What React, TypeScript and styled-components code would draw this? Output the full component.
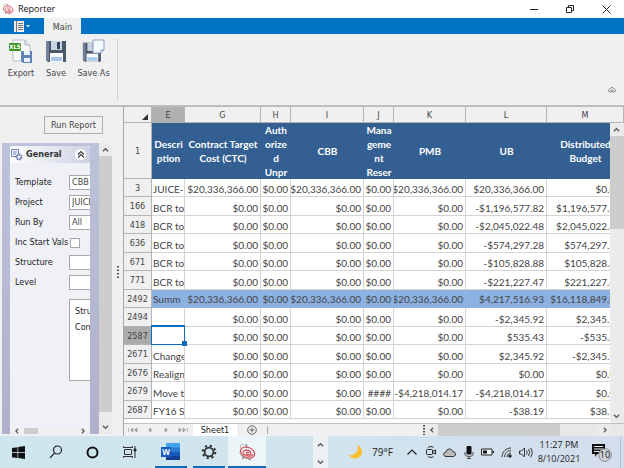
import React from "react";
import styled, { createGlobalStyle } from "styled-components";

const ui = `"DejaVu Sans Condensed", "Noto Sans", sans-serif`;
const segoe = `"Open Sans", "Noto Sans", sans-serif`;
const sheetFont = `Lato, "Open Sans", sans-serif`;

const Global = createGlobalStyle`
  * { box-sizing: border-box; }
  body { margin: 0; background: #f0f0f0; }
  button, select, input { font: inherit; color: inherit; }
`;

const Page = styled.div`
  display: flex;
  flex-direction: column;
  min-height: 100vh;
  overflow: hidden;
  background: #f0f0f0;
  color: #444;
  font: 9px/12px ${ui};
`;

const PlainButton = styled.button`
  display: flex;
  align-items: center;
  justify-content: center;
  padding: 0;
  border: 0;
  background: none;
`;

/* Title bar */
const TitleBar = styled.header`
  display: flex;
  align-items: center;
  height: 18px;
  padding-left: 2px;
  background: #fff;
  color: #111;
`;
const Title = styled.h1`
  flex: 1;
  margin: 0 0 0 4px;
  font: 9px/16px ${segoe};
`;
const WindowButton = styled(PlainButton)`
  width: 36px;
  height: 16px;
`;

/* Ribbon */
const TabStrip = styled.nav`
  display: flex;
  gap: 1px;
  height: 17px;
  background: #0072c6;
  border-bottom: 1px solid #e4eef6;
`;
const AppMenu = styled(PlainButton)`
  width: 43px;
  gap: 2px;
`;
const Tab = styled(PlainButton)`
  width: 37px;
  height: 17px;
  background: #f0f0f0;
`;
const Ribbon = styled.section`
  display: flex;
  height: 72px;
  padding: 4px 6px 5px 2px;
  border-bottom: 2px solid #bcbcbc;
`;
const RibbonGroup = styled.div`
  display: flex;
  align-items: flex-start;
  width: 116px;
  border-right: 1px solid #cfcfcf;
`;
const RibbonButton = styled(PlainButton)<{ $w: number }>`
  flex-direction: column;
  gap: 4px;
  width: ${(p) => p.$w}px;
  white-space: nowrap;
`;
const Collapse = styled(PlainButton)`
  margin: auto 0 0 auto;
  width: 12px;
  height: 14px;
  align-items: flex-start;
`;

/* Body */
const Body = styled.main`
  display: flex;
  flex: 1;
  min-height: 0;
`;
const Side = styled.aside`
  display: flex;
  flex-direction: column;
  width: 112px;
  padding: 9px 0 2px 2px;
`;
const RunButton = styled.button`
  align-self: flex-end;
  width: 59px;
  height: 18px;
  margin-right: 9px;
  padding: 0;
  border: 1px solid #adadad;
  background: #f1f1f1;
`;
const Pane = styled.div`
  display: flex;
  flex: 1;
  margin-top: 9px;
`;
const PaneBody = styled.div`
  display: flex;
  flex: 1;
  min-width: 0;
  padding: 3px 9px 0 8px;
  background: linear-gradient(#bcc2da, #b0b0cc);
`;
const Group = styled.section`
  display: flex;
  flex-direction: column;
  flex: 1;
  min-width: 0;
  overflow: hidden;
  background: #eff1f6;
`;
const GroupHead = styled.header`
  display: flex;
  align-items: center;
  height: 17px;
  padding: 0 4px 0 1px;
  border-radius: 3px 3px 0 0;
  background: linear-gradient(90deg, #fff, #ccd0e2);
  h2 {
    flex: 1;
    margin: 0 0 0 3px;
    font: bold 9px/15px ${ui};
    color: #333;
  }
`;
const Round = styled(PlainButton)`
  width: 11px;
  height: 11px;
  border-radius: 50%;
  background: #fff;
`;
const Form = styled.form`
  display: flex;
  flex-direction: column;
  padding: 9px 0 0 5px;
  color: #222;
`;
const Field = styled.div`
  display: grid;
  grid-template-columns: 54px 60px;
  align-items: center;
  height: 20px;
  white-space: nowrap;
`;
const Select = styled.select`
  appearance: none;
  height: 15px;
  padding: 0 2px;
  border: 1px solid #a8a8a8;
  border-radius: 0;
  background: #fff;
  color: #444;
`;
const Check = styled.input`
  appearance: none;
  width: 10px;
  height: 10px;
  margin: 2px 0 0 1px;
  border: 1px solid #a8a8a8;
  background: #fff;
`;
const ListBox = styled.ul`
  width: 60px;
  height: 82px;
  margin: 7px 0 0 54px;
  padding: 3px 5px;
  border: 1px solid #a8a8a8;
  background: #fff;
  list-style: none;
  line-height: 16px;
`;
const HScroll = styled.div`
  display: flex;
  align-items: center;
  height: 6px;
  margin-top: auto;
  padding: 0 4px;
  background: #f0f0f0;
  i {
    width: 14px;
    height: 6px;
    margin: 0 auto 0 4px;
    background: #cdcdcd;
  }
`;
const VScroll = styled.div`
  display: flex;
  flex-direction: column;
  width: 13px;
  background: #f0f0f0;
`;
const Arrow = styled(PlainButton)`
  width: 13px;
  height: 13px;
  background: #ebebeb;
`;
const Thumb = styled.div`
  flex: 1;
  background: #cdcdcd;
`;
const ArrowTall = styled(Arrow)`
  height: 22px;
  padding-top: 8px;
`;
const Splitter = styled.div`
  display: flex;
  align-items: center;
  justify-content: center;
  width: 11px;
`;

/* Spreadsheet */
const Sheet = styled.section`
  display: flex;
  flex-direction: column;
  flex: 1;
  min-width: 0;
  border-left: 1px solid #a8a8a8;
`;
const SheetView = styled.div`
  position: relative;
  flex: 1;
  overflow: hidden;
  background: #fff;
`;
const Table = styled.table`
  width: 100%;
  min-width: 500px;
  table-layout: fixed;
  border-collapse: separate;
  border-spacing: 0;
  font: 10px/17px ${sheetFont};
  tbody tr:nth-child(odd) > * { height: 18px; }
  tbody tr:nth-child(even) > * { height: 19px; }
`;
const Col = styled.col<{ $w?: number }>`
  width: ${(p) => (p.$w ? `${p.$w}px` : "auto")};
`;
const Letter = styled.th<{ $on?: boolean }>`
  height: 16px;
  padding: 0;
  border: solid #b4b4b4;
  border-width: 0 1px 1px 0;
  background: ${(p) => (p.$on ? "#b0b0b0" : "#f0f0f0")};
  font: 9px/14px ${ui};
  text-align: center;
  svg { display: block; margin: 5px 3px 0 auto; }
`;
const RowNo = styled.th<{ $on?: boolean }>`
  padding: 0;
  border: solid #b4b4b4;
  border-width: 0 1px 1px 0;
  background: ${(p) => (p.$on ? "#ababab" : "#f0f0f0")};
  font: 9px/14px ${ui};
  text-align: center;
`;
const Heading = styled.td`
  height: 56px;
  padding: 0;
  overflow: hidden;
  background: #335f93;
  color: #fff;
  font: bold 10px/14px ${sheetFont};
  text-align: center;
  white-space: nowrap;
`;
const Cell = styled.td<{ $sum?: boolean; $left?: boolean; $active?: boolean }>`
  position: relative;
  padding: ${(p) => (p.$sum ? "2px" : "4px")} 2px 0 1px;
  border: solid ${(p) => (p.$sum ? "#8db1e2" : "#d4d4d4")};
  border-width: 0 1px 1px 0;
  background: ${(p) => (p.$sum ? "#8db1e2" : "#fff")};
  line-height: 13px;
  text-align: ${(p) => (p.$left ? "left" : "right")};
  white-space: nowrap;
  overflow: ${(p) => (p.$active ? "visible" : "hidden")};
`;
const WideValue = styled.span`
  display: flex;
  justify-content: flex-end;
`;
const Selection = styled.span`
  position: absolute;
  inset: -2px -1px -1px -1px;
  border: 1px solid #0f6cbd;
  border-width: 2px 1px 1px;
  z-index: 1;
  &::after {
    content: "";
    position: absolute;
    right: -3px;
    bottom: -2px;
    width: 5px;
    height: 5px;
    background: #0f6cbd;
  }
`;
const SheetScroll = styled(VScroll)`
  position: absolute;
  top: 16px;
  right: 0;
  bottom: 0;
  width: 14px;
  background: #ebebeb;
  ${Thumb} { flex: 0 0 93px; }
  ${Arrow}:last-child { margin-top: auto; }
`;
const SheetBar = styled.footer`
  display: flex;
  align-items: center;
  height: 13px;
  border-top: 1px solid #c0c0c0;
  background: #f0f0f0;
`;
const NavButton = styled(PlainButton)`
  width: 17px;
  height: 12px;
`;
const AddButton = styled(NavButton)`
  width: 30px;
`;
const SheetTab = styled(PlainButton)`
  width: 44px;
  height: 12px;
  margin-left: 1px;
  background: #fff;
  color: #222;
`;
const BarScroll = styled.div`
  display: flex;
  align-items: center;
  width: 199px;
  height: 12px;
  background: #e8e8e8;
  ${Thumb} { flex: 0 0 122px; height: 12px; }
  ${Arrow} { background: #ebebeb; height: 12px; }
  ${Arrow}:last-child { margin-left: auto; margin-right: 13px; }
`;
const Divider = styled.i`
  width: 1px;
  height: 8px;
  margin-right: auto;
  background: #aaa;
`;

/* Taskbar */
const Taskbar = styled.footer`
  display: flex;
  align-items: center;
  height: 32px;
  background: linear-gradient(90deg, #cfe6ee, #d0e4ee 50%, #d4dded);
  color: #222;
  font: 10px/14px ${segoe};
`;
const TaskGroup = styled.div`
  display: flex;
  margin-right: 4px;
`;
const TaskButton = styled(PlainButton)<{ $state?: "open" | "active" }>`
  width: ${(p) => (p.$state ? 38 : 37)}px;
  height: 32px;
  background: ${(p) => (p.$state === "active" ? "#edf5f9" : "none")};
  border: solid transparent;
  border-width: 0 ${(p) => (p.$state === "open" ? 3 : 0)}px;
  position: relative;
  &::after {
    content: "";
    position: absolute;
    left: 0;
    right: 0;
    bottom: 0;
    height: ${(p) => (p.$state ? 2 : 0)}px;
    background: #0f6cbd;
  }
`;
const Spin = styled.div`
  display: flex;
  flex-direction: column;
  justify-content: space-between;
  align-items: center;
  width: 15px;
  height: 32px;
  margin-left: auto;
  padding: 5px 0 2px;
  background: #eef1f3;
`;
const Weather = styled(PlainButton)`
  gap: 9px;
  margin-left: 20px;
  width: 46px;
`;
const Tray = styled.div`
  display: flex;
  margin-left: 8px;
`;
const TrayButton = styled(PlainButton)`
  width: 19px;
  height: 24px;
`;
const Clock = styled.time`
  width: 48px;
  text-align: center;
  font-size: 9px;
  white-space: nowrap;
`;
const Notice = styled(PlainButton)`
  width: 38px;
  height: 32px;
  border-right: 1px solid #b4c4d4;
  margin-right: 3px;
`;

const Chevron = ({ d = "up", s = 7 }: { d?: "up" | "down" | "left" | "right"; s?: number }) => {
  const paths = { up: "M1 6l3-3 3 3", down: "M1 2l3 3 3-3", left: "M5.5 1l-3 3 3 3", right: "M2.5 1l3 3-3 3" };
  return (
    <svg width={s} height={s} viewBox="0 0 8 8" fill="none" stroke="#555" strokeWidth="1.6">
      <path d={paths[d]} />
    </svg>
  );
};

const DoubleUp = ({ c }: { c: string }) => (
  <svg width="10" height="9" viewBox="0 0 10 9" fill="none" stroke={c} strokeWidth="1.1">
    <path d="M2 4.500l3-3 3 3M2 7.500l3-3 3 3" />
  </svg>
);

const CollapseMark = () => (
  <svg width="10" height="8" viewBox="0 0 10 8" fill="none" stroke="#888">
    <path d="M1 4.500l4-3.500 4 3.500-1.200 1.500L5 3.800 2.200 6zM3.500 6.500L5 5l1.500 1.500" />
  </svg>
);

const Swirl = ({ s }: { s: number }) => (
  <svg width={s} height={s} viewBox="0 0 16 16" fill="none">
    <path d="M3 5C1 2 3 0 6 2.500" stroke="#bbb" strokeWidth="1" />
    <path d="M5 12l-1 2.500M9 13.500l2 1.500M8 3.500l-1-2.500" stroke="#888" strokeWidth="1.200" />
    <ellipse cx="8.500" cy="8.500" rx="6.500" ry="4.600" transform="rotate(22 8.500 8.500)" stroke="#cf505a" strokeWidth="1.100" />
    <path d="M13 10c-1 3-8 1.500-8.500-1.500C4.200 5.500 11 5.500 11.500 9c0 2-4 1.800-4 0 0-1 2-1 2.200 0" stroke="#d2434c" strokeWidth="1" />
    <path d="M1.500 8c1 4 5 6 9 6" stroke="#999" strokeWidth=".8" />
  </svg>
);

const Floppy = () => (
  <>
    <path d="M1 2h20v21H3l-2-2z" fill="#4b586c" />
    <path d="M1 2h3v20l-3-1z" fill="#75839a" />
    <path d="M6 2h11v9H6z" fill="#c9d5e2" />
    <path d="M12 3h3v7h-3z" fill="#344258" />
    <path d="M5 14h13v9H5z" fill="#f8fafc" />
    <path d="M6 18h11v4H6z" fill="#a8c8e8" />
  </>
);
const SaveIcon = () => (
  <svg width="22" height="24" viewBox="0 0 22 24"><Floppy /></svg>
);
const SaveAsIcon = () => (
  <svg width="23" height="24" viewBox="0 0 23 24">
    <g transform="translate(0 2) scale(.9)"><Floppy /></g>
    <path d="M11 1h11v10l-3 3h-8z" fill="#f4f8ff" stroke="#8da0c0" />
    <path d="M19 14v-3h3" fill="#cfdcf0" stroke="#8da0c0" />
  </svg>
);
const ExportIcon = () => (
  <svg width="24" height="24" viewBox="0 0 24 24">
    <path d="M4 1h12l5 5v16H4z" fill="#f8fafc" stroke="#b5bfcc" />
    <path d="M16 1v5h5" fill="#dfe6ef" stroke="#a5b2c4" />
    <rect x="0" y="4" width="12" height="8" rx="1" fill="#3d9426" />
    <text x="6" y="10" fontSize="6" fontWeight="bold" textAnchor="middle" fill="#fff">XLS</text>
    <path d="M12 12h11v12H14l-2-2z" fill="#5f83b5" />
    <path d="M15 12h6v4h-6zM15 19h6v4h-6z" fill="#e9f2fb" />
  </svg>
);

type Row = { n: number; v: string[]; sum?: boolean };
const z = "$0.00";
const big = "$20,336,366.00";
const rows: Row[] = [
  { n: 3, v: ["JUICE-I", big, z, big, z, big, big, "$0.00"] },
  { n: 166, v: ["BCR to", z, z, z, z, z, "-$1,196,577.82", "$1,196,577.82"] },
  { n: 418, v: ["BCR to", z, z, z, z, z, "-$2,045,022.48", "$2,045,022.48"] },
  { n: 636, v: ["BCR to", z, z, z, z, z, "-$574,297.28", "$574,297.28"] },
  { n: 671, v: ["BCR to", z, z, z, z, z, "-$105,828.88", "$105,828.88"] },
  { n: 771, v: ["BCR to", z, z, z, z, z, "-$221,227.47", "$221,227.47"] },
  { n: 2492, sum: true, v: ["Summ", big, z, big, z, big, "$4,217,516.93", "$16,118,849.07"] },
  { n: 2494, v: ["", z, z, z, z, z, "-$2,345.92", "$2,345.92"] },
  { n: 2587, v: ["", z, z, z, z, z, "$535.43", "-$535.43"] },
  { n: 2671, v: ["Change", z, z, z, z, z, "$2,345.92", "-$2,345.92"] },
  { n: 2676, v: ["Realign", z, z, z, z, z, z, "$0.00"] },
  { n: 2679, v: ["Move t", z, z, z, "####", "-$4,218,014.17", "-$4,218,014.17", "$0.00"] },
  { n: 2687, v: ["FY16 Se", z, z, z, z, z, "-$38.19", "$38.19"] },
];
const letters = ["E", "G", "H", "I", "J", "K", "L", "M"];
const widths = [28, 33, 76, 30, 73, 30, 72, 81];
const headings = [
  ["Descri", "ption"], ["Contract Target", "Cost (CTC)"], ["Auth", "orize", "d", "Unpr"], ["CBB"],
  ["Mana", "geme", "nt", "Reser"], ["PMB"], ["UB"], ["Distributed", "Budget"],
];
const fields = [
  { id: "template", label: "Template", value: "CBB Report" },
  { id: "project", label: "Project", value: "JUICE" },
  { id: "runby", label: "Run By", value: "All" },
  { id: "vals", label: "Inc Start Vals", check: true },
  { id: "structure", label: "Structure", value: "" },
  { id: "level", label: "Level", value: "" },
];

const Navs = [
  { label: "First", d: "M3.500 3v4M8 3L5.500 5 8 7zM12 3L9.500 5 12 7z" },
  { label: "Previous", d: "M9 3L6.500 5 9 7z" },
  { label: "Next", d: "M6 3l2.500 2L6 7z" },
  { label: "Last", d: "M3 3l2.500 2L3 7zM7 3l2.500 2L7 7zM11.500 3v4" },
];

export default function App() {
  return (
    <Page>
      <Global />
      <TitleBar>
        <Swirl s={12} />
        <Title>Reporter</Title>
        <WindowButton aria-label="Minimize">
          <svg width="8" height="8" stroke="#222"><path d="M0 4.500h8" /></svg>
        </WindowButton>
        <WindowButton aria-label="Restore">
          <svg width="8" height="8" fill="none" stroke="#222"><path d="M.5 2.500h5v5h-5zM2.500 2.500v-2h5v5h-2" /></svg>
        </WindowButton>
        <WindowButton aria-label="Close">
          <svg width="9" height="9" stroke="#222"><path d="M.5.5l8 8M8.500.5l-8 8" /></svg>
        </WindowButton>
      </TitleBar>
      <TabStrip>
        <AppMenu aria-label="Application menu">
          <svg width="10" height="11" viewBox="0 0 10 11">
            <path d="M0 0h10v11H0z" fill="#eee" />
            <path d="M2.500 0v11M4 2.500h5M4 4.500h5M4 6.500h5M4 8.500h5" stroke="#777" />
          </svg>
          <svg width="4" height="3"><path d="M0 0h4L2 2.500z" fill="#d5e6f3" /></svg>
        </AppMenu>
        <Tab>Main</Tab>
      </TabStrip>
      <Ribbon>
        <RibbonGroup>
          <RibbonButton $w={38}><ExportIcon />Export</RibbonButton>
          <RibbonButton $w={32}><SaveIcon />Save</RibbonButton>
          <RibbonButton $w={43}><SaveAsIcon />Save As</RibbonButton>
        </RibbonGroup>
        <Collapse aria-label="Collapse ribbon"><CollapseMark /></Collapse>
      </Ribbon>

      <Body>
        <Side>
          <RunButton>Run Report</RunButton>
          <Pane>
            <PaneBody>
              <Group>
                <GroupHead>
                  <svg width="12" height="12" viewBox="0 0 12 12">
                    <path d="M.5.5h7v7h-7z" fill="#eef3ff" stroke="#7184b8" />
                    <path d="M2 3h4M2 5h3" stroke="#7184b8" />
                    <circle cx="8" cy="8" r="2.600" fill="#c8d0e8" stroke="#6274aa" strokeWidth="1.800" strokeDasharray="1.500 .8" />
                    <circle cx="8" cy="8" r="1" fill="#fff" />
                  </svg>
                  <h2>General</h2>
                  <Round aria-label="Collapse General"><DoubleUp c="#333" /></Round>
                </GroupHead>
                <Form>
                  {fields.map((f) => (
                    <Field key={f.id}>
                      <label htmlFor={f.id}>{f.label}</label>
                      {f.check ? (
                        <Check id={f.id} type="checkbox" />
                      ) : (
                        <Select id={f.id}><option>{f.value}</option></Select>
                      )}
                    </Field>
                  ))}
                  <ListBox>
                    <li>Stru</li>
                    <li>Con</li>
                  </ListBox>
                </Form>
                <HScroll><Chevron d="left" s={6} /><i /><Chevron d="right" s={6} /></HScroll>
              </Group>
            </PaneBody>
            <VScroll>
              <Arrow aria-label="Scroll up"><Chevron /></Arrow>
              <Thumb />
              <ArrowTall aria-label="Scroll down"><Chevron d="down" /></ArrowTall>
            </VScroll>
          </Pane>
        </Side>
        <Splitter>
          <svg width="2" height="12" fill="#555"><path d="M0 0h2v1.500H0zM0 3.500h2V5H0zM0 7h2v1.500H0zM0 10.500h2V12H0z" /></svg>
        </Splitter>

        <Sheet>
          <SheetView>
            <Table>
              <colgroup>
                {widths.map((w, i) => <Col key={i} $w={w} />)}
                <Col />
              </colgroup>
              <thead>
                <tr>
                  <Letter><svg width="6" height="6"><path d="M6 0v6H0z" fill="#333" /></svg></Letter>
                  {letters.map((l) => <Letter key={l} $on={l === "E"}>{l}</Letter>)}
                </tr>
                <tr>
                  <RowNo>1</RowNo>
                  {headings.map((h) => (
                    <Heading key={h[0]}>
                      {h.map((t, i) => <React.Fragment key={t}>{i > 0 && <br />}{t}</React.Fragment>)}
                    </Heading>
                  ))}
                </tr>
              </thead>
              <tbody>
                {rows.map((r) => (
                  <tr key={r.n}>
                    <RowNo scope="row" $on={r.n === 2587}>{r.n}</RowNo>
                    {r.v.map((t, i) => {
                      const active = r.n === 2587 && i === 0;
                      return (
                        <Cell key={i} $sum={r.sum} $left={i === 0} $active={active}>
                          {t.length > 13 ? <WideValue>{t}</WideValue> : t}
                          {active && <Selection />}
                        </Cell>
                      );
                    })}
                  </tr>
                ))}
              </tbody>
            </Table>
            <SheetScroll>
              <Arrow aria-label="Row up"><Chevron /></Arrow>
              <Thumb />
              <Arrow aria-label="Row down"><Chevron d="down" /></Arrow>
            </SheetScroll>
          </SheetView>
          <SheetBar>
            {Navs.map((n) => (
              <NavButton key={n.label} aria-label={n.label}>
                <svg width="15" height="10" fill="#999" stroke="#999" strokeWidth=".6"><path d={n.d} /></svg>
              </NavButton>
            ))}
            <SheetTab>Sheet1</SheetTab>
            <AddButton aria-label="Add sheet">
              <svg width="10" height="10" fill="none" stroke="#666"><circle cx="5" cy="5" r="4.300" /><path d="M5 2.500v5M2.500 5h5" /></svg>
            </AddButton>
            <Divider />
            <svg width="2" height="10" fill="#444"><path d="M0 0h2v1.500H0zM0 3h2v1.500H0zM0 6h2v1.500H0zM0 9h2v1H0z" /></svg>
            <BarScroll>
              <Arrow aria-label="Scroll left"><Chevron d="left" s={6} /></Arrow>
              <Thumb />
              <Arrow aria-label="Scroll right"><Chevron d="right" s={6} /></Arrow>
            </BarScroll>
          </SheetBar>
        </Sheet>
      </Body>

      <Taskbar>
        <TaskGroup>
          <TaskButton aria-label="Start">
            <svg width="13" height="13" viewBox="0 0 13 13"><path d="M0 2l5.500-.8v5H0zM6.200 1L13 0v6.200H6.200zM0 7h5.500v5L0 11.200zM6.200 7H13v6l-6.800-1z" fill="#111" /></svg>
          </TaskButton>
          <TaskButton aria-label="Search">
            <svg width="14" height="14" fill="none" stroke="#222" strokeWidth="1.200"><circle cx="8.500" cy="5" r="4" /><path d="M5.600 8L1 12.800" /></svg>
          </TaskButton>
          <TaskButton aria-label="Cortana">
            <svg width="13" height="13" fill="none" stroke="#111" strokeWidth="2"><circle cx="6.500" cy="6.500" r="5" /></svg>
          </TaskButton>
          <TaskButton aria-label="Task view">
            <svg width="14" height="12" fill="none" stroke="#333"><path d="M1.500 3.500h7v5h-7zM.5 0v1.500h9V0M.5 12v-1.500h9V12M12 0v12" /><path d="M11 3h2v2h-2z" fill="#111" /></svg>
          </TaskButton>
        </TaskGroup>
        <TaskButton $state="open" aria-label="Word">
          <svg width="20" height="18" viewBox="0 0 20 18">
            <path d="M5 0h14v5H5z" fill="#41a5ee" /><path d="M5 4.500h14V9H5z" fill="#2b7cd3" /><path d="M5 9h14v4H5z" fill="#185abd" /><path d="M5 13h14v4H5z" fill="#103f91" />
            <path d="M0 4h10v10H0z" fill="#185abd" />
            <text x="5" y="12" fontSize="8" fontWeight="bold" textAnchor="middle" fill="#fff">W</text>
          </svg>
        </TaskButton>
        <TaskButton $state="open" aria-label="Settings">
          <svg width="16" height="16" viewBox="0 0 16 16" fill="none" stroke="#333"><circle cx="8" cy="8" r="4.400" strokeWidth="1.800" /><circle cx="8" cy="8" r="6.300" strokeWidth="2" strokeDasharray="2.200 2.748" /></svg>
        </TaskButton>
        <TaskButton $state="active" aria-label="Reporter"><Swirl s={18} /></TaskButton>

        <Spin><Chevron /><Chevron d="down" /></Spin>
        <Weather>
          <svg width="14" height="14" viewBox="0 0 14 14"><path d="M8.500 0C15 3 14.500 12 7 13.500 4 14 1.500 12.500 0 10 6 11 10 6 8.500 0z" fill="#fbc02d" /></svg>
          <span>79°F</span>
        </Weather>
        <Tray>
          <TrayButton aria-label="Show hidden icons">
            <svg width="10" height="6" fill="none" stroke="#222" strokeWidth="1.200"><path d="M.5 5.500L5 1l4.500 4.500" /></svg>
          </TrayButton>
          <TrayButton aria-label="Meet now">
            <svg width="10" height="12" fill="none" stroke="#222"><rect x=".5" y="3.500" width="6" height="5" rx="1" /><path d="M6.500 5.500l3-1.500v4l-3-1.500M2 1.500C3.500.3 6 .3 7.500 1.500M2 10.500c1.500 1.200 4 1.200 5.500 0" /></svg>
          </TrayButton>
          <TrayButton aria-label="OneDrive">
            <svg width="13" height="9" viewBox="0 0 13 9"><path d="M3 8.500C-.3 8 0 4.500 2.800 4.200 3.500.5 8.500-.2 9.500 3.500c3.500 0 4 4.500 1 5z" fill="#bbb" stroke="#333" /></svg>
          </TrayButton>
          <TrayButton aria-label="Microphone">
            <svg width="10" height="13" viewBox="0 0 10 13"><rect x="2.500" y="0" width="5" height="8.500" rx="1" fill="#111" /><path d="M1 6v2.500c0 2.500 8 2.500 8 0V6M5 10v3M3 12.500h4" fill="none" stroke="#444" /></svg>
          </TrayButton>
          <TrayButton aria-label="Battery">
            <svg width="13" height="8"><path d="M.5 1h10.500v6H.5z" fill="#eef3f8" stroke="#222" /><path d="M2 2.500h4v3H2z" fill="#111" /><path d="M11.500 3H13v2h-1.500z" fill="#222" /></svg>
          </TrayButton>
          <TrayButton aria-label="Wi-Fi">
            <svg width="11" height="11" fill="none" stroke="#333" strokeWidth="1"><path d="M1 10C1 5 5 1 10 1M3.500 10C3.500 6.500 6.500 3.500 10 3.500M6 10c0-2.500 2-4 4-4" /><circle cx="9" cy="9" r="1.300" fill="#222" /></svg>
          </TrayButton>
          <TrayButton aria-label="Volume">
            <svg width="14" height="11" fill="none" stroke="#333"><path d="M.5 4h2l3-3v9l-3-3h-2zM7.500 3.500q1.500 2 0 4M9.500 2q2.500 3.500 0 7M11.500.8q3.500 4.700 0 9.400" /></svg>
          </TrayButton>
        </Tray>
        <Clock>11:27 PM<br />8/10/2021</Clock>
        <Notice aria-label="10 notifications">
          <svg width="20" height="20" viewBox="0 0 20 20">
            <path d="M0 2h13v10H5l-2 3v-3H0z" fill="#111" />
            <path d="M2 4.500h9M2 7h9M2 9.500h6" stroke="#e5ebf3" />
            <circle cx="13" cy="13" r="6.300" fill="#d0d4da" stroke="#888" />
            <text x="13" y="16" fontSize="9" textAnchor="middle" fill="#111">10</text>
          </svg>
        </Notice>
      </Taskbar>
    </Page>
  );
}
